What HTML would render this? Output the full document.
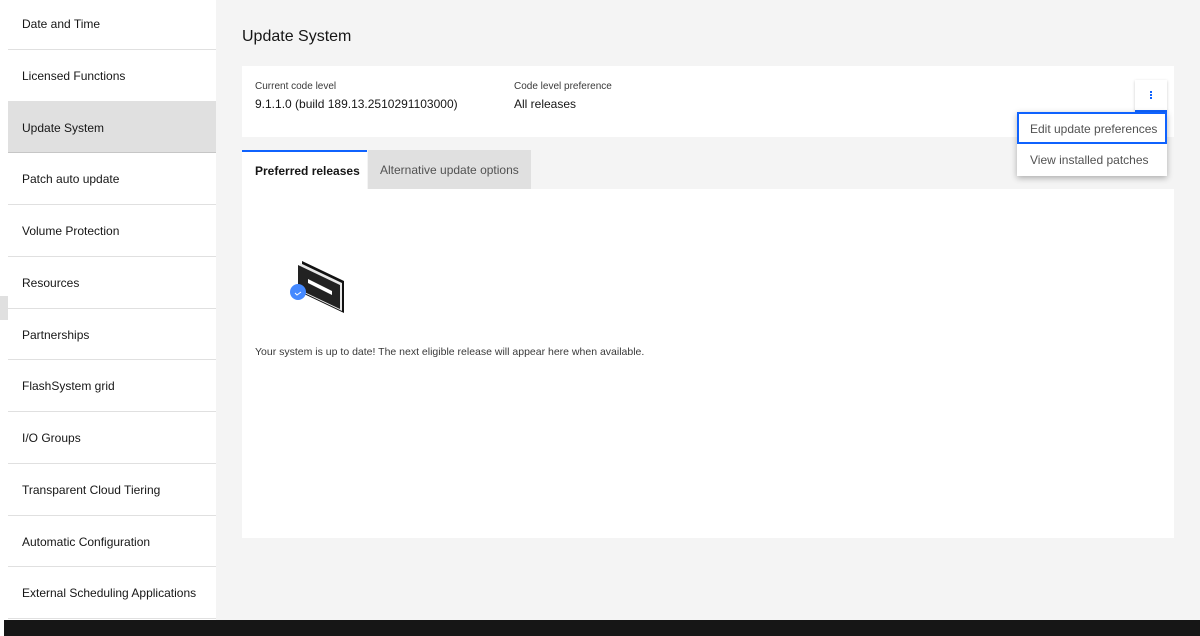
<!DOCTYPE html>
<html><head><style>
*{box-sizing:border-box;margin:0;padding:0}
body{width:1200px;height:636px;overflow:hidden;background:#fff;font-family:"Liberation Sans",sans-serif;color:#161616;position:relative}
.side{position:absolute;left:8px;top:-2px;width:208px}
.side div{height:51.75px;border-bottom:1px solid #e0e0e0;font-size:12px;padding-left:14px;line-height:53px;color:#161616;background:#fff}
.side div.sel{background:#e0e0e0;border-bottom-color:#c6c6c6}
.main{position:absolute;left:216px;top:0;width:984px;height:620px;background:#f4f4f4}
.abs{position:absolute}
.foot{position:absolute;left:4px;top:620px;width:1196px;height:16px;background:#161616}
</style></head><body>
<div class="side">
<div>Date and Time</div><div>Licensed Functions</div><div class="sel">Update System</div><div>Patch auto update</div><div>Volume Protection</div><div>Resources</div><div>Partnerships</div><div>FlashSystem grid</div><div>I/O Groups</div><div>Transparent Cloud Tiering</div><div>Automatic Configuration</div><div>External Scheduling Applications</div>
</div>
<div class="abs" style="left:0;top:296px;width:8px;height:24px;background:#e0e0e0"></div>
<div class="main">
<div class="abs" style="left:26px;top:28px;font-size:16px">Update System</div>
<div class="abs" style="left:26px;top:66px;width:932px;height:71px;background:#fff">
<div class="abs" style="left:13px;top:15px;font-size:10px;color:#393939">Current code level</div>
<div class="abs" style="left:13px;top:31px;font-size:12px">9.1.1.0 (build 189.13.2510291103000)</div>
<div class="abs" style="left:272px;top:15px;font-size:10px;color:#393939">Code level preference</div>
<div class="abs" style="left:272px;top:31px;font-size:12px">All releases</div>
</div>
<div class="abs" style="left:919px;top:80px;width:32px;height:32px;background:#fff;border-bottom:2px solid #0f62fe;box-shadow:0 1px 3px rgba(0,0,0,.2)">
<div class="abs" style="left:15px;top:11px;width:2px;height:2px;background:#0f62fe;box-shadow:0 3px 0 #0f62fe,0 6px 0 #0f62fe"></div></div>
<div class="abs" style="left:26px;top:150px;width:125px;height:40px;background:#fff;border-top:2px solid #0f62fe;font-size:12px;font-weight:bold;padding:12px 0 0 13px">Preferred releases</div>
<div class="abs" style="left:152px;top:150px;width:163px;height:39px;background:#e0e0e0;font-size:12px;color:#525252;padding:13px 0 0 12px">Alternative update options</div>
<div class="abs" style="left:26px;top:189px;width:932px;height:349px;background:#fff">
<svg class="abs" style="left:46px;top:70px" width="60" height="56" viewBox="0 0 60 56">
<polygon points="14,2 56,22 56,54 14,34" fill="#111"/>
<polygon points="12,4 54,24 54,52 12,32" fill="#e8e8e8"/>
<polygon points="10,6 52,26 52,50 10,30" fill="#222"/>
<polygon points="20,20 44,32 44,36 20,24" fill="#fff"/>
<circle cx="10" cy="33" r="8" fill="#4589ff"/>
<path d="M7 34 l2 2 l4 -3" stroke="#fff" stroke-width="1" fill="none"/>
</svg>
<div class="abs" style="left:13px;top:157px;font-size:10.5px;color:#393939">Your system is up to date! The next eligible release will appear here when available.</div>
</div>
<div class="abs" style="left:801px;top:112px;width:150px;height:64px;background:#fff;box-shadow:0 2px 6px rgba(0,0,0,.3)">
<div style="height:32px;border:2px solid #0f62fe;font-size:12px;color:#525252;padding:8px 0 0 11px">Edit update preferences</div>
<div style="height:32px;font-size:12px;color:#525252;padding:9px 0 0 13px">View installed patches</div>
</div>
</div>
<div class="foot"></div>
</body></html>
